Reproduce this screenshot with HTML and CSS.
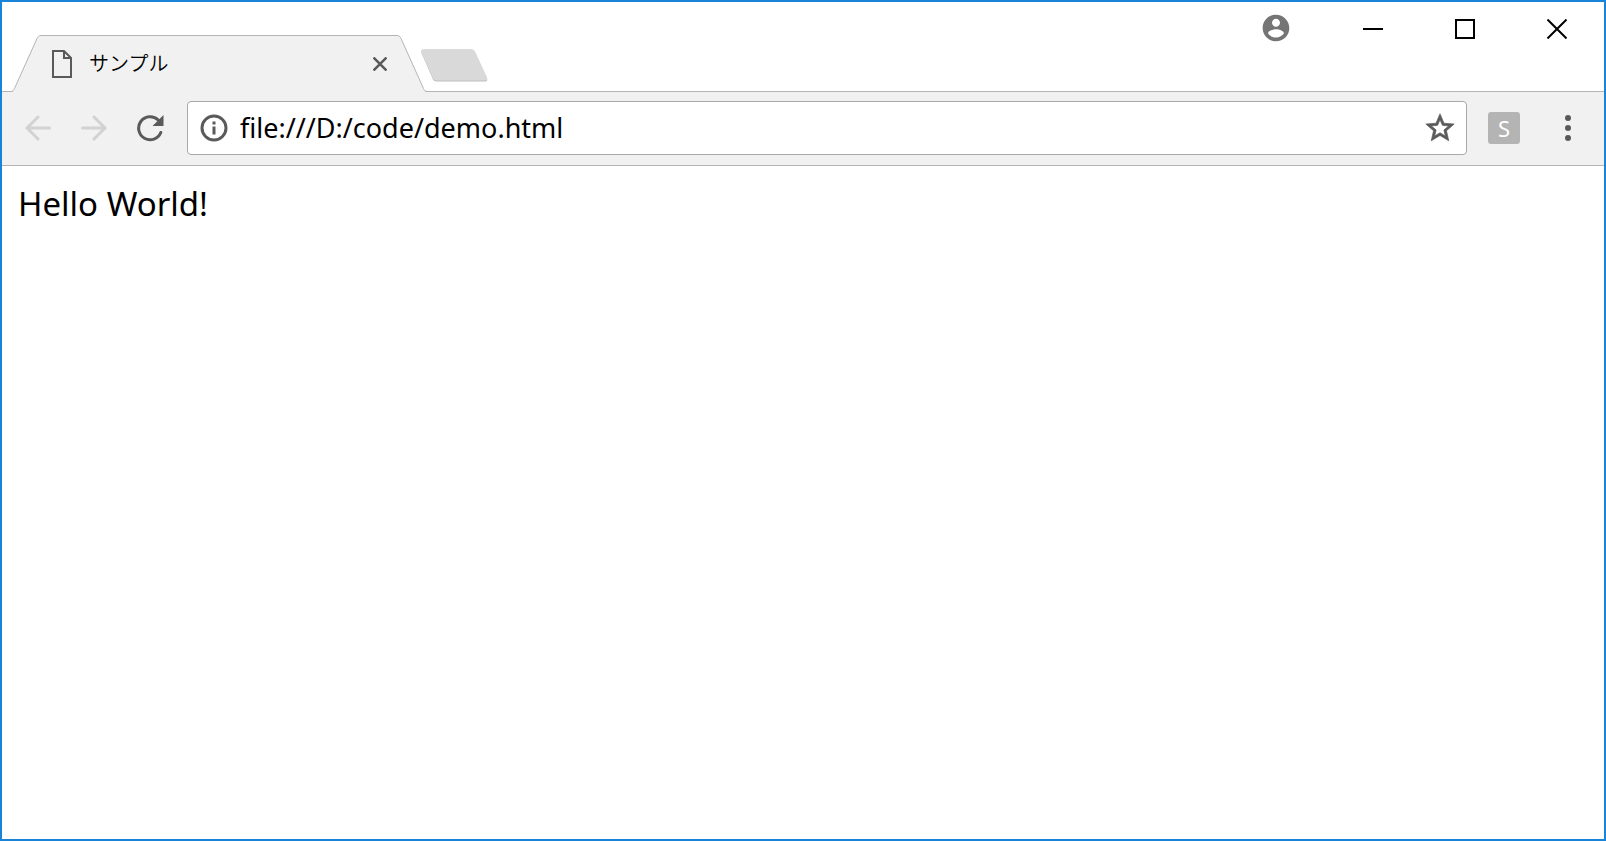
FILE: index.html
```html
<!DOCTYPE html>
<html lang="ja">
    <head>
        <meta charset="utf-8">
        <meta name="viewport" content="width=device-width, initial-scale=1">
        <link rel="stylesheet" href="styles.css">
        <title>サンプル</title>
    </head>
    <body>
        <div class="window">
            <header class="tab-strip">
                <div class="tab">
                    <svg class="tab-edge" width="30" height="57" viewBox="0 0 30 57">
                        <path class="tab-fill" d="M0 57C2 57 2.500 56 3.500 54L26 3.500C27 1.500 28 .5 30 .5V57z"/>
                        <path class="tab-line" d="M0 56.500C1.500 56.500 2.500 55.500 3.500 53.500L26 3.500C27 1.500 28 .5 30 .5"/>
                    </svg>
                    <div class="tab-body">
                        <svg width="20" height="28" viewBox="0 0 20 28" fill="none" stroke="#5a5a5a" stroke-width="2">
                            <path d="M1 1h11l7 7v19H1z"/>
                            <path d="M12 1v7h7"/>
                        </svg>
                        <span class="tab-title">サンプル</span>
                        <button class="tab-close" type="button" aria-label="タブを閉じる">
                            <svg width="14" height="14" viewBox="0 0 14 14" stroke="#5a5a5a" stroke-width="2.500">
                                <path d="M.5 .5l13 13M13.500 .5l-13 13"/>
                            </svg>
                        </button>
                    </div>
                    <svg class="tab-edge" width="30" height="57" viewBox="0 0 30 57">
                        <path class="tab-fill" d="M30 57C28 57 27.500 56 26.500 54L4 3.500C3 1.500 2 .5 0 .5V57z"/>
                        <path class="tab-line" d="M30 56.500C28.500 56.500 27.500 55.500 26.500 53.500L4 3.500C3 1.500 2 .5 0 .5"/>
                    </svg>
                </div>
                <button class="new-tab" type="button" aria-label="新しいタブ">
                    <svg width="68" height="33" viewBox="0 0 68 33">
                        <path fill="#bdbdbd" d="M4 1h47q3 0 4 2.500l12 26q1 3-2 3H17q-3 0-4-2L1.500 4Q.5 1 4 1z"/>
                        <path fill="#d9d9d9" d="M4 0h47q3 0 4 2.500l12 26q1 3-2 3H17q-3 0-4-2L1.500 3Q.5 0 4 0z"/>
                    </svg>
                </button>
                <div class="window-buttons">
                    <button class="account" type="button" aria-label="ユーザー">
                        <svg width="32" height="32" viewBox="0 0 24 24" fill="#757575">
                            <path d="M12 2C6.480 2 2 6.480 2 12s4.480 10 10 10 10-4.480 10-10S17.520 2 12 2zm0 3c1.660 0 3 1.340 3 3s-1.340 3-3 3-3-1.340-3-3 1.340-3 3-3zm0 14.200c-2.500 0-4.710-1.280-6-3.220.03-1.990 4-3.080 6-3.080 1.990 0 5.970 1.090 6 3.080-1.290 1.940-3.500 3.220-6 3.220z"/>
                        </svg>
                    </button>
                    <button class="window-button" type="button" aria-label="最小化">
                        <svg width="20" height="20" viewBox="0 0 20 20"><path d="M0 9h20v2H0z"/></svg>
                    </button>
                    <button class="window-button" type="button" aria-label="最大化">
                        <svg width="20" height="20" viewBox="0 0 20 20" fill="none" stroke="#000" stroke-width="2"><path d="M1 1h18v18H1z"/></svg>
                    </button>
                    <button class="window-button" type="button" aria-label="閉じる">
                        <svg width="20" height="20" viewBox="0 0 20 20" stroke="#000" stroke-width="2"><path d="M.5 .5l19 19M19.500 .5l-19 19"/></svg>
                    </button>
                </div>
            </header>

            <nav class="toolbar">
                <button class="nav-button" type="button" aria-label="戻る" disabled>
                    <svg width="28" height="28" viewBox="0 0 28 28" fill="none" stroke="#d2d2d2" stroke-width="3" stroke-linecap="round">
                        <path d="M25.500 14H3M14 3L3 14l11 11"/>
                    </svg>
                </button>
                <button class="nav-button" type="button" aria-label="進む" disabled>
                    <svg width="28" height="28" viewBox="0 0 28 28" fill="none" stroke="#d2d2d2" stroke-width="3" stroke-linecap="round">
                        <path d="M2.500 14H25M14 3l11 11-11 11"/>
                    </svg>
                </button>
                <button class="nav-button" type="button" aria-label="再読み込み">
                    <svg width="28" height="28" viewBox="0 0 28 28">
                        <path fill="none" stroke="#5a5a5a" stroke-width="3" stroke-linecap="round" d="M22.200 6A11.500 11.500 0 1 0 24.800 18.500"/>
                        <path fill="#5a5a5a" d="M27.500 1v11h-11z"/>
                    </svg>
                </button>
                <div class="omnibox">
                    <svg width="28" height="28" viewBox="0 0 28 28">
                        <circle cx="14" cy="14" r="12" fill="none" stroke="#5a5a5a" stroke-width="3"/>
                        <path fill="#5a5a5a" d="M12.500 7.500h3v3h-3zM12.500 12.500h3v8h-3z"/>
                    </svg>
                    <input class="url" type="text" aria-label="アドレス" value="file:///D:/code/demo.html" spellcheck="false">
                    <button class="star" type="button" aria-label="ブックマーク">
                        <svg width="34" height="34" viewBox="0 0 24 24" fill="#5a5a5a" stroke="#5a5a5a" stroke-width=".5">
                            <path d="M22 9.240l-7.190-.62L12 2 9.190 8.630 2 9.240l5.460 4.730L5.820 21 12 17.270 18.180 21l-1.630-7.030L22 9.240zM12 15.400l-3.760 2.270 1-4.280-3.320-2.880 4.380-.38L12 6.100l1.710 4.040 4.380.38-3.320 2.880 1 4.280L12 15.400z"/>
                        </svg>
                    </button>
                </div>
                <button class="extension" type="button">S</button>
                <button class="menu" type="button" aria-label="メニュー">
                    <svg width="8" height="28" viewBox="0 0 8 28" fill="#5a5a5a">
                        <circle cx="4" cy="4" r="3"/>
                        <circle cx="4" cy="14" r="3"/>
                        <circle cx="4" cy="24" r="3"/>
                    </svg>
                </button>
            </nav>

            <main class="page">Hello World!</main>
        </div>
    </body>
</html>
```
FILE: styles.css
```css
body {
    margin: 0;
    color: #000;
    font-family: "Noto Sans", "Noto Sans CJK JP", sans-serif;
}

.window {
    background: #fff;
    border: 2px solid #1883d7;
    box-sizing: border-box;
    display: flex;
    flex-direction: column;
    min-height: 100vh;
}

button {
    align-items: center;
    background: none;
    border: 0;
    display: flex;
    font-family: inherit;
    justify-content: center;
    margin: 0;
    padding: 0;
}

svg {
    display: block;
    flex: none;
}

.tab-strip {
    align-items: flex-end;
    border-bottom: 1px solid #b4b4b4;
    box-sizing: border-box;
    display: flex;
    height: 90px;
    padding-left: 9px;
}

.tab {
    display: flex;
    height: 57px;
    margin-bottom: -1px;
}

.tab-fill {
    fill: #f1f1f1;
}

.tab-line {
    fill: none;
    stroke: #b4b4b4;
}

.tab-body {
    align-items: center;
    background: #f1f1f1;
    border-top: 1px solid #b4b4b4;
    box-sizing: border-box;
    display: flex;
    padding: 0 10px 0 11px;
    width: 356px;
}

.tab-title {
    flex: 1;
    font-family: "Noto Sans CJK JP", sans-serif;
    font-size: 20px;
    font-weight: 350;
    line-height: 28px;
    margin-left: 17px;
    padding-bottom: 2px;
}

.new-tab {
    margin: 0 0 9px -7px;
}

.window-buttons {
    align-self: flex-start;
    display: flex;
    margin-left: auto;
    padding-right: 1px;
}

.account {
    height: 52px;
    margin-right: 35px;
}

.window-button {
    height: 54px;
    width: 92px;
}

.toolbar {
    align-items: center;
    background: #f1f1f1;
    border-bottom: 1px solid #b4b4b4;
    box-sizing: border-box;
    display: flex;
    height: 74px;
    padding: 0 32px 2px 22px;
}

.nav-button {
    margin-right: 28px;
}

.omnibox {
    align-items: center;
    background: #fff;
    border: 1px solid #a9a9a9;
    border-radius: 4px;
    box-sizing: border-box;
    display: flex;
    flex: 1;
    height: 54px;
    margin-left: -5px;
    padding: 0 9px 0 12px;
}

.url {
    background: none;
    border: 0;
    color: #000;
    flex: 1;
    font-family: inherit;
    font-size: 27px;
    line-height: 36px;
    margin-left: 12px;
    min-width: 0;
    outline: 0;
    padding: 0;
}

.extension {
    background: #b4b4b4;
    border-radius: 3px;
    color: #fff;
    font-size: 22px;
    height: 32px;
    line-height: 32px;
    margin: 0 44px 0 21px;
    width: 32px;
}

.page {
    flex: 1;
    font-size: 33px;
    line-height: 44px;
    padding: 16px;
}
```
